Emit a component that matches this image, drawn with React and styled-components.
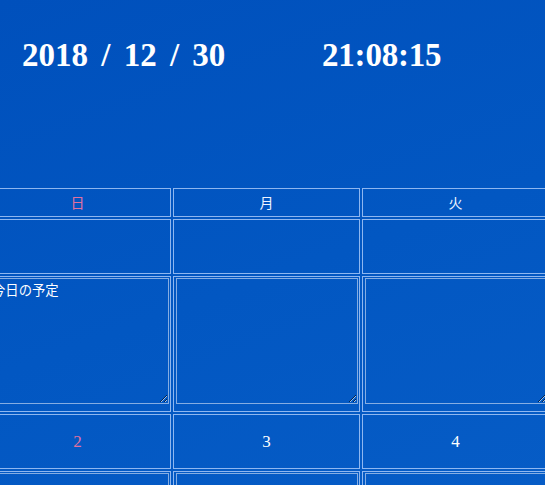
import styled, { createGlobalStyle } from "styled-components";

const GlobalStyle = createGlobalStyle`
  html, body {
    margin: 0;
    padding: 0;
    overflow: hidden;
  }
  body {
    height: 485px;
    background: linear-gradient(160deg, #0050bc 0%, #0257c2 55%, #065cc6 100%);
    color: #ffffff;
    font-family: "Noto Sans CJK JP", "Noto Sans", sans-serif;
  }
`;

const Clock = styled.header`
  box-sizing: border-box;
  height: 188px;
  padding: 35px 0 0 22px;
  display: flex;
  font-family: "Liberation Serif", "Times New Roman", serif;
  font-weight: 700;
  font-size: 33px;
  line-height: 40px;
`;

const DateText = styled.div`
  width: 300px;
  word-spacing: 5px;
`;

const TimeText = styled.div`
  letter-spacing: -0.2px;
`;

const Grid = styled.div`
  display: grid;
  grid-template-columns: repeat(7, 187px);
  gap: 2px;
  margin-left: -16px;
`;

const Cell = styled.div`
  box-sizing: border-box;
  border: 1px solid rgba(190, 215, 255, 0.75);
  display: flex;
  align-items: center;
  justify-content: center;
`;

const HeadCell = styled(Cell)`
  height: 29px;
  padding-bottom: 1px;
  font-size: 14px;
  color: ${(p) => (p.$sun ? "#e2719f" : "#eef4ff")};
`;

const DayCell = styled(Cell)`
  height: 55px;
  font-family: "Liberation Serif", "Times New Roman", serif;
  font-size: 17px;
  color: ${(p) => (p.$sun ? "#e2719f" : "#ffffff")};
`;

const NoteCell = styled(Cell)`
  height: 136px;
  padding: 1px 1px 7px 2px;
  align-items: stretch;
`;

const Note = styled.textarea`
  box-sizing: border-box;
  display: block;
  width: 100%;
  height: 126px;
  margin: 0;
  padding: 1px 4px;
  background: transparent;
  border: 1px solid rgba(190, 210, 240, 0.7);
  color: #ffffff;
  font-family: "Noto Sans CJK JP", sans-serif;
  font-size: 13.33px;
  outline: none;
`;

const WEEK = ["日", "月", "火", "水", "木", "金", "土"];

const weeks = [
  ["", "", "", "", "", "", "1"],
  ["2", "3", "4", "5", "6", "7", "8"],
  ["9", "10", "11", "12", "13", "14", "15"],
];

export default function App() {
  return (
    <>
      <GlobalStyle />
      <Clock>
        <DateText>2018 / 12 / 30</DateText>
        <TimeText>21:08:15</TimeText>
      </Clock>
      <Grid>
        {WEEK.map((w, i) => (
          <HeadCell key={w} $sun={i === 0}>
            {w}
          </HeadCell>
        ))}
        {weeks.map((week, wi) => (
          <>
            {week.map((d, i) => (
              <DayCell key={"d" + wi + i} $sun={i === 0}>
                {d}
              </DayCell>
            ))}
            {week.map((d, i) => (
              <NoteCell key={"n" + wi + i}>
                <Note defaultValue={wi === 0 && i === 0 ? "今日の予定" : ""} />
              </NoteCell>
            ))}
          </>
        ))}
      </Grid>
    </>
  );
}
